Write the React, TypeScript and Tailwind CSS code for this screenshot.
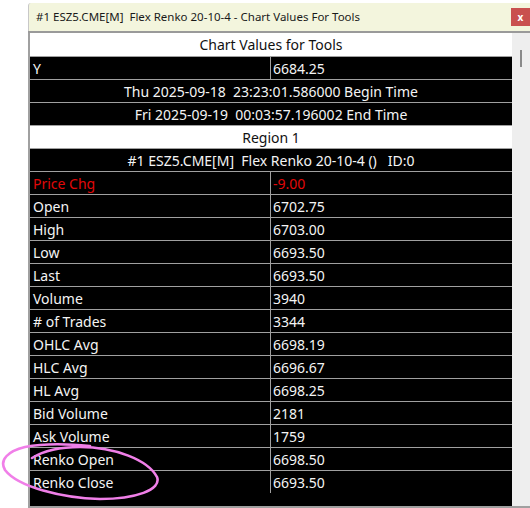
const rows: { label: string; value: string; red?: boolean }[] = [
  { label: 'Price Chg', value: '-9.00', red: true },
  { label: 'Open', value: '6702.75' },
  { label: 'High', value: '6703.00' },
  { label: 'Low', value: '6693.50' },
  { label: 'Last', value: '6693.50' },
  { label: 'Volume', value: '3940' },
  { label: '# of Trades', value: '3344' },
  { label: 'OHLC Avg', value: '6698.19' },
  { label: 'HLC Avg', value: '6696.67' },
  { label: 'HL Avg', value: '6698.25' },
  { label: 'Bid Volume', value: '2181' },
  { label: 'Ask Volume', value: '1759' },
  { label: 'Renko Open', value: '6698.50' },
  { label: 'Renko Close', value: '6693.50' },
];

function PairRow({ label, value, red, last }: { label: string; value: string; red?: boolean; last?: boolean }) {
  const color = red ? 'text-[#e00808]' : 'text-[#f4f4f4]';
  return (
    <div className={`flex h-[23px] bg-black ${last ? 'border-b border-black' : 'border-b border-[#a0a0a0]'}`}>
      <div className={`w-[241px] pl-[3px] flex items-center border-r border-[#a0a0a0] ${color}`}>{label}</div>
      <div className={`flex-1 pl-[2px] flex items-center ${color}`}>{value}</div>
    </div>
  );
}

function CenterRow({ text, light, tall }: { text: string; light?: boolean; tall?: boolean }) {
  return (
    <div
      className={`flex ${tall ? 'h-[24px]' : 'h-[23px]'} items-center justify-center whitespace-pre border-b border-[#a0a0a0] ${
        light ? 'bg-white text-[#111]' : 'bg-black text-[#f4f4f4]'
      }`}
    >
      {text}
    </div>
  );
}

export default function App() {
  return (
    <div className="relative w-[530px] h-[508px] bg-white overflow-hidden font-['Noto_Sans',sans-serif]">
      <div className="ml-[28px] pt-[3px] h-full flex flex-col">
        {/* title bar */}
        <div className="h-[28px] flex items-center justify-between bg-[#f3f5dd] border-l border-[#c8c8c8] rounded-tl-[3px]">
          <span className="pl-[7px] text-[11.5px] text-[#1a1a1a] whitespace-pre">
            #1 ESZ5.CME[M]  Flex Renko 20-10-4 - Chart Values For Tools
          </span>
          <div className="w-[19px] h-[18px] bg-[#c9504f] text-white text-[10px] font-bold flex items-center justify-center leading-none">
            x
          </div>
        </div>
        <div className="h-[2px] bg-[#9a9a9a]" />

        <div className="flex-1 flex min-h-0 border-l-2 border-[#a0a0a0] border-b-2">
          <div className="w-[482px] flex flex-col bg-black text-[14px]">
            <CenterRow text="Chart Values for Tools" light tall />
            <PairRow label="Y" value="6684.25" />
            <CenterRow text="Thu 2025-09-18  23:23:01.586000 Begin Time" />
            <CenterRow text="Fri 2025-09-19  00:03:57.196002 End Time" />
            <CenterRow text="Region 1" light />
            <CenterRow text="#1 ESZ5.CME[M]  Flex Renko 20-10-4 ()   ID:0" />
            {rows.map((r, i) => (
              <PairRow key={i} label={r.label} value={r.value} red={r.red} last={i === rows.length - 1} />
            ))}
          </div>
          <div className="flex-1 bg-[#eeeeee] relative">
            <div className="absolute left-[8px] top-[17px] w-[2px] h-[17px] bg-[#8a8a8a]" />
          </div>
        </div>
      </div>

      {/* annotation */}
      <svg className="absolute left-0 top-0 pointer-events-none" width="530" height="508">
        <path
          d="M 32 458 C 45 450, 60 447, 80 447 C 115 447, 148 460, 157 477 C 162 490, 135 499, 100 499 C 62 498, 18 487, 5 470 C -1 460, 8 451, 25 447 C 45 443, 70 444, 90 446"
          fill="none"
          stroke="#f07fe8"
          strokeWidth="2.6"
          strokeLinecap="round"
        />
      </svg>
    </div>
  );
}
